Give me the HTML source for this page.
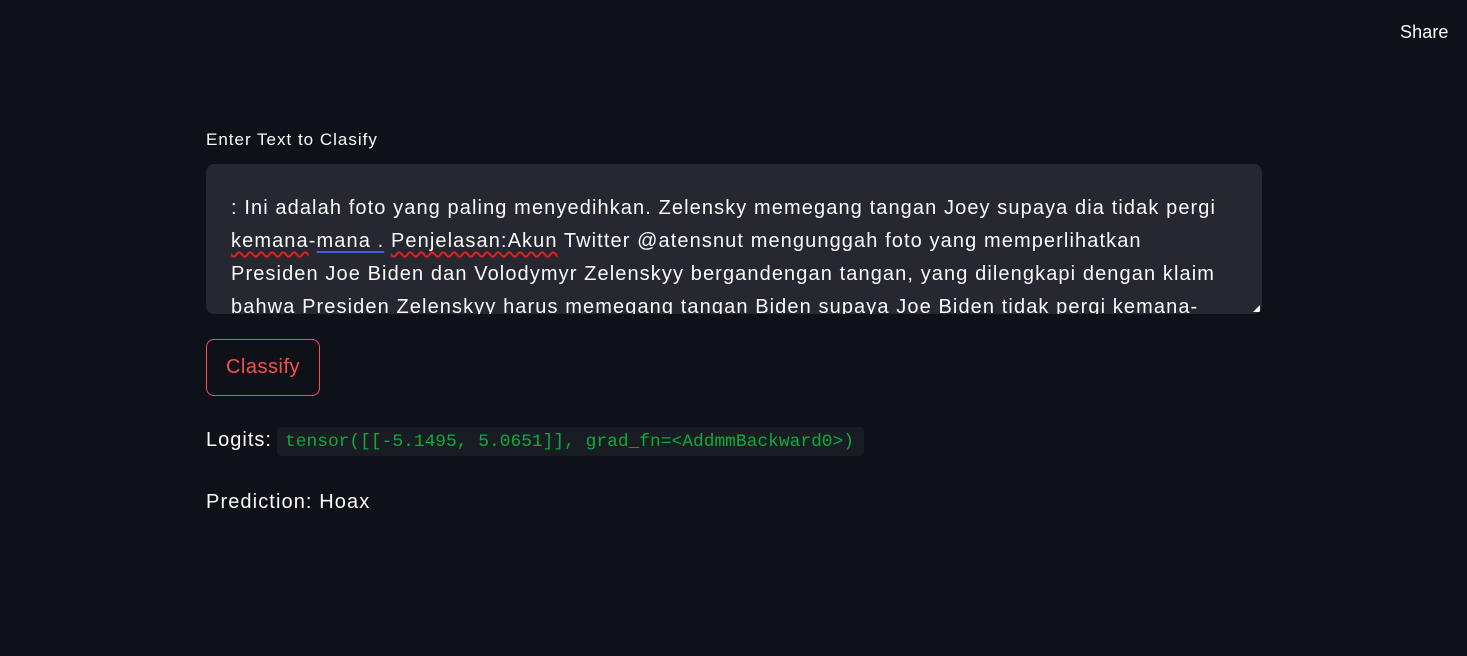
<!DOCTYPE html>
<html><head><style>
body{margin:0;width:1467px;height:656px;background:#0e1117;font-family:"Liberation Sans",sans-serif;color:#fafafa;position:relative;overflow:hidden}
.share{position:absolute;left:1400px;top:22px;font-size:18px;letter-spacing:0.1px}
.label{position:absolute;left:206px;top:130px;font-size:17px;letter-spacing:1px}
.ta{position:absolute;left:206px;top:164px;width:1056px;height:150px;background:#262730;border-radius:8px;overflow:hidden}
.ta div{position:absolute;left:25px;font-size:20px;white-space:nowrap;letter-spacing:1.1px}
.sq{text-decoration:underline wavy #e02020;text-underline-offset:4px}
.bl{text-decoration:underline #4060e0;text-underline-offset:4px}
.btn{position:absolute;left:206px;top:339px;width:112px;height:55px;border:1px solid #ff4b4b;border-radius:8px;color:#ff4b4b;font-size:20px;text-align:center;line-height:55px;letter-spacing:0.5px}
.log{position:absolute;left:206px;top:429px;font-size:20px;letter-spacing:1px}
.code{position:absolute;left:277px;top:427px;width:587px;height:29px;background:#1a1c24;border-radius:4px;color:#09ab3b;font-family:"Liberation Mono",monospace;font-size:17.9px;line-height:30px;padding-left:8px;box-sizing:border-box;white-space:nowrap}
.pred{position:absolute;left:206px;top:491px;font-size:20px;letter-spacing:1.1px}
.rz{position:absolute;right:2px;bottom:2px;width:0;height:0;border-left:7px solid transparent;border-bottom:7px solid #fafafa}
</style></head><body>
<div class="share">Share</div>
<div class="label">Enter Text to Clasify</div>
<div class="ta">
<div style="top:33px">: Ini adalah foto yang paling menyedihkan. Zelensky memegang tangan Joey supaya dia tidak pergi</div>
<div style="top:66px"><span class="sq">kemana</span>-<span class="bl">mana .</span> <span class="sq">Penjelasan:Akun</span> Twitter @atensnut mengunggah foto yang memperlihatkan</div>
<div style="top:99px">Presiden Joe Biden dan Volodymyr Zelenskyy bergandengan tangan, yang dilengkapi dengan klaim</div>
<div style="top:132px">bahwa Presiden Zelenskyy harus memegang tangan Biden supaya Joe Biden tidak pergi kemana-</div>
<div class="rz" style="left:auto"></div>
</div>
<div class="btn">Classify</div>
<div class="log">Logits:</div>
<div class="code">tensor([[-5.1495, 5.0651]], grad_fn=&lt;AddmmBackward0&gt;)</div>
<div class="pred">Prediction: Hoax</div>
</body></html>
